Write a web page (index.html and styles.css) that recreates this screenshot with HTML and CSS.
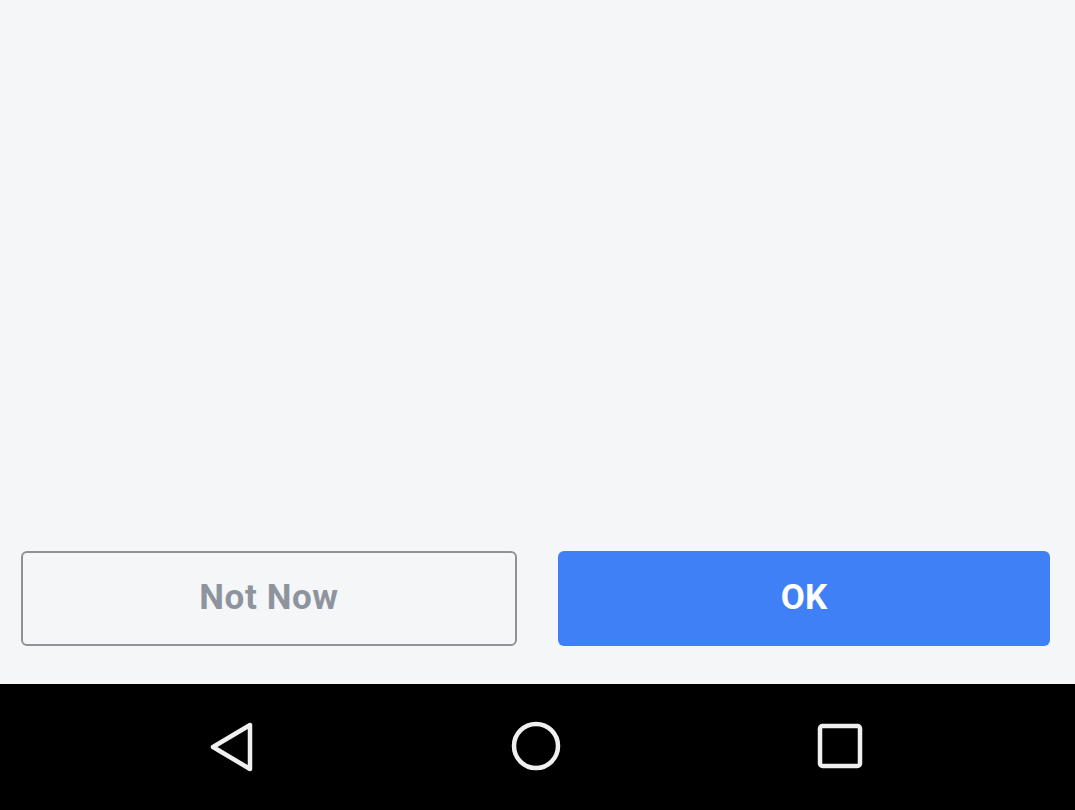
FILE: index.html
```html
<!DOCTYPE html>
<html>
<head>
<meta charset="utf-8">
<link rel="stylesheet" href="styles.css">
</head>
<body>
<div class="screen">
  <main class="content"></main>
  <div class="actions">
    <button class="btn btn-secondary">Not Now</button>
    <button class="btn btn-primary">OK</button>
  </div>
  <nav class="navbar">
    <svg class="nav-icon" width="48" height="52" viewBox="0 0 48 52">
      <path d="M40 4 L40 48 L3 26 Z" fill="none" stroke="#f0f0f0" stroke-width="4.5" stroke-linejoin="round"/>
    </svg>
    <svg class="nav-icon" width="52" height="52" viewBox="0 0 52 52">
      <circle cx="25" cy="25" r="22" fill="none" stroke="#f0f0f0" stroke-width="4.5"/>
    </svg>
    <svg class="nav-icon" width="48" height="52" viewBox="0 0 48 52">
      <rect x="5" y="5" width="40" height="40" rx="2.5" fill="none" stroke="#f0f0f0" stroke-width="4.5"/>
    </svg>
  </nav>
</div>
</body>
</html>
```
FILE: styles.css
```css
html, body {
  margin: 0;
  padding: 0;
}
body {
  background: #f5f6f7;
  font-family: Roboto, "Liberation Sans", Arial, sans-serif;
}
.screen {
  display: flex;
  flex-direction: column;
  height: 810px;
}
.content {
  flex: 1;
}
.actions {
  display: flex;
  gap: 41px;
  padding: 0 25px 38px 21px;
}
.btn {
  flex: 1 1 0;
  height: 95px;
  border-radius: 6px;
  font-family: Roboto, "Liberation Sans", Arial, sans-serif;
  font-weight: 700;
  font-size: 35px;
  padding: 0 0 2px 0;
  box-sizing: border-box;
}
.btn-secondary {
  background: #f5f6f7;
  border: 2px solid #8e9299;
  color: #8d949e;
  letter-spacing: 0.6px;
}
.btn-primary {
  background: #4080f7;
  border: none;
  color: #fff;
}
.navbar {
  height: 126px;
  background: #000;
  display: flex;
  align-items: center;
  justify-content: space-between;
  padding: 0 212px 0 210px;
}
.nav-icon {
  display: block;
}
```
